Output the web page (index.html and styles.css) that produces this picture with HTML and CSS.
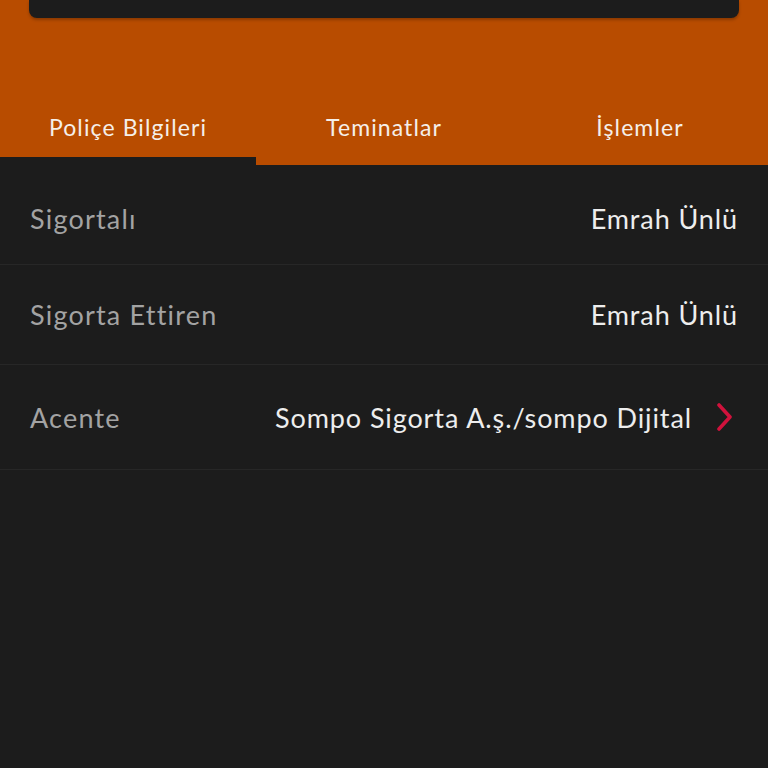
FILE: index.html
```html
<!DOCTYPE html>
<html lang="tr">
<head>
<meta charset="utf-8">
<link rel="stylesheet" href="styles.css">
</head>
<body>
<div class="screen">
  <header class="hero">
    <div class="hero-card"></div>
    <nav class="tabs">
      <div class="tab active">Poliçe Bilgileri</div>
      <div class="tab">Teminatlar</div>
      <div class="tab">İşlemler</div>
    </nav>
  </header>
  <section class="rows">
    <div class="row row-first">
      <span class="label">Sigortalı</span>
      <span class="value">Emrah Ünlü</span>
    </div>
    <div class="row">
      <span class="label">Sigorta Ettiren</span>
      <span class="value">Emrah Ünlü</span>
    </div>
    <div class="row row-link">
      <span class="label">Acente</span>
      <span class="value-group">
        <span class="value">Sompo Sigorta A.ş./sompo Dijital</span>
        <svg class="chev" width="18" height="28" viewBox="0 0 18 28"><path d="M3 2 L14 14 L3 26" fill="none" stroke="#d0123c" stroke-width="3.6" stroke-linecap="round" stroke-linejoin="round"/></svg>
      </span>
    </div>
  </section>
</div>
</body>
</html>
```
FILE: styles.css
```css
* { box-sizing: border-box; }
html, body { margin: 0; padding: 0; }
body {
  background: #1c1c1c;
  font-family: "Lato", "Liberation Sans", sans-serif;
  width: 768px;
  height: 768px;
  overflow: hidden;
}
.screen { display: flex; flex-direction: column; }
.hero {
  background: #b84c00;
  display: flex;
  flex-direction: column;
}
.hero-card {
  margin: 0 29px;
  height: 18px;
  background: #1c1c1c;
  border-radius: 0 0 8px 8px;
  box-shadow: 0 2px 3px rgba(0,0,0,0.25);
}
.tabs {
  display: grid;
  grid-template-columns: 256px 256px 256px;
  margin-top: 68px;
}
.tab {
  height: 79px;
  display: flex;
  align-items: center;
  justify-content: center;
  color: #f5efe9;
  font-size: 23px;
  letter-spacing: 1.1px;
  padding-top: 11px;
  border-bottom: 8px solid #b84c00;
}
.tab.active { border-bottom-color: #1c1c1c; }
.rows { display: flex; flex-direction: column; }
.row {
  display: flex;
  justify-content: space-between;
  align-items: center;
  height: 100px;
  padding: 0 30px;
  border-bottom: 1px solid #272727;
  font-size: 27px;
}
.row-first { height: 100px; padding-top: 8px; }
.row-link { height: 105px; padding-right: 34px; }
.label { color: #a3a3a3; letter-spacing: 1.2px; }
.value { color: #ededed; letter-spacing: 0.9px; }
.value-group { display: flex; align-items: center; gap: 24px; }
.chev { display: block; }
```
